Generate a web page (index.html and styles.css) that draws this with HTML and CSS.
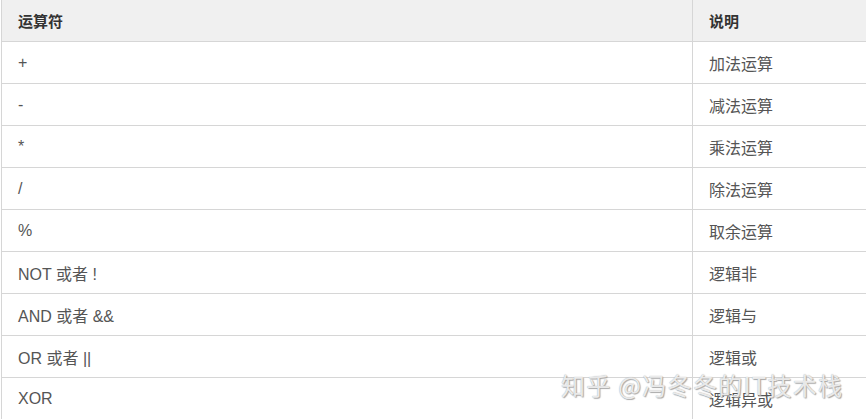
FILE: index.html
```html
<!DOCTYPE html>
<html lang="zh">
<head>
<meta charset="utf-8">
<link rel="stylesheet" href="styles.css">
</head>
<body>
<div class="wrap">
<table class="ops">
  <thead>
    <tr><th class="c1">运算符</th><th class="c2">说明</th></tr>
  </thead>
  <tbody>
    <tr><td>+</td><td>加法运算</td></tr>
    <tr><td>-</td><td>减法运算</td></tr>
    <tr><td>*</td><td>乘法运算</td></tr>
    <tr><td>/</td><td>除法运算</td></tr>
    <tr><td>%</td><td>取余运算</td></tr>
    <tr><td>NOT 或者 !</td><td>逻辑非</td></tr>
    <tr><td>AND 或者 &amp;&amp;</td><td>逻辑与</td></tr>
    <tr><td>OR 或者 ||</td><td>逻辑或</td></tr>
    <tr><td>XOR</td><td>逻辑异或</td></tr>
  </tbody>
</table>
<div class="mark">知乎 @冯冬冬的IT技术栈</div>
</div>
</body>
</html>
```
FILE: styles.css
```css
html, body {
  margin: 0;
  padding: 0;
  background: #fff;
  overflow: hidden;
}
.wrap {
  position: relative;
  padding-left: 1px;
  width: 900px;
}
.ops {
  border-collapse: collapse;
  width: 900px;
  font-family: "Liberation Sans", "Noto Sans CJK SC", sans-serif;
  font-size: 16px;
  color: #555;
}
.ops th, .ops td {
  border: 1px solid #d6d6d6;
  height: 41px;
  padding: 0 0 0 16px;
  text-align: left;
  vertical-align: middle;
}
.ops th {
  background: #f0f0f0;
  color: #333;
  font-weight: bold;
  font-size: 15px;
  border-top: none;
  height: 41px;
}
.ops .c1 { width: 674px; }
.mark {
  position: absolute;
  left: 561px;
  top: 367px;
  font-family: "Noto Sans CJK SC", sans-serif;
  font-size: 24px;
  letter-spacing: 1.3px;
  color: rgba(255, 255, 255, 0.8);
  text-shadow: 0 0 1px #999, 1px 1px 1px #aaa;
  white-space: nowrap;
}
```
